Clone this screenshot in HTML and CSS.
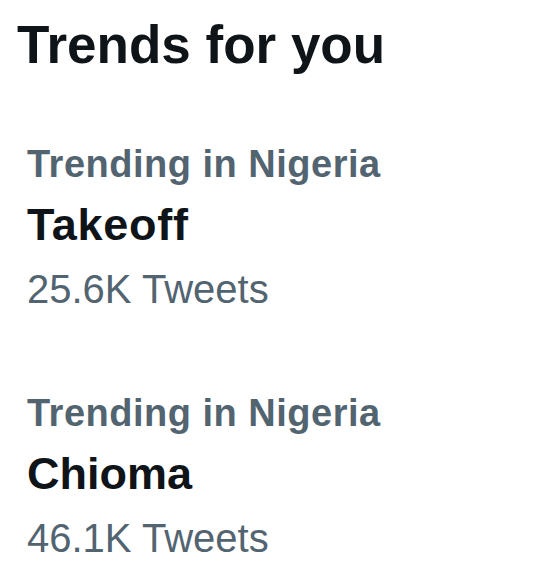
FILE: index.html
```html
<!DOCTYPE html>
<html lang="en">
<head>
<meta charset="utf-8">
<title>Trends for you</title>
<link rel="stylesheet" href="styles.css">
</head>
<body>
<main class="panel">
  <h1 class="title">Trends for you</h1>
  <section class="trends">
    <article class="trend">
      <div class="trend-context">Trending in Nigeria</div>
      <div class="trend-name trend-name-wide">Takeoff</div>
      <div class="trend-count">25.6K Tweets</div>
    </article>
    <article class="trend">
      <div class="trend-context">Trending in Nigeria</div>
      <div class="trend-name">Chioma</div>
      <div class="trend-count">46.1K Tweets</div>
    </article>
  </section>
</main>
</body>
</html>
```

FILE: styles.css
```css
html, body {
  margin: 0;
  padding: 0;
  background: #ffffff;
}

body {
  font-family: "Liberation Sans", Arial, sans-serif;
  color: #0f1419;
}

.panel {
  width: 559px;
  height: 568px;
  box-sizing: border-box;
  padding-top: 13px;
  overflow: hidden;
}

.title {
  margin: 0;
  padding-left: 17px;
  font-size: 53px;
  line-height: 64px;
  font-weight: 700;
  color: #0f1419;
}

.trends {
  display: flex;
  flex-direction: column;
  gap: 61px;
  padding-top: 57px;
  padding-left: 27px;
}

.trend {
  display: flex;
  flex-direction: column;
}

.trend-context {
  font-size: 38px;
  line-height: 60px;
  font-weight: 700;
  letter-spacing: 0.5px;
  color: #536471;
}

.trend-name {
  font-size: 45px;
  line-height: 62px;
  font-weight: 700;
  color: #0f1419;
}

.trend-name-wide {
  letter-spacing: 0.7px;
}

.trend-count {
  font-size: 40px;
  line-height: 66px;
  font-weight: 400;
  color: #536471;
}
```
